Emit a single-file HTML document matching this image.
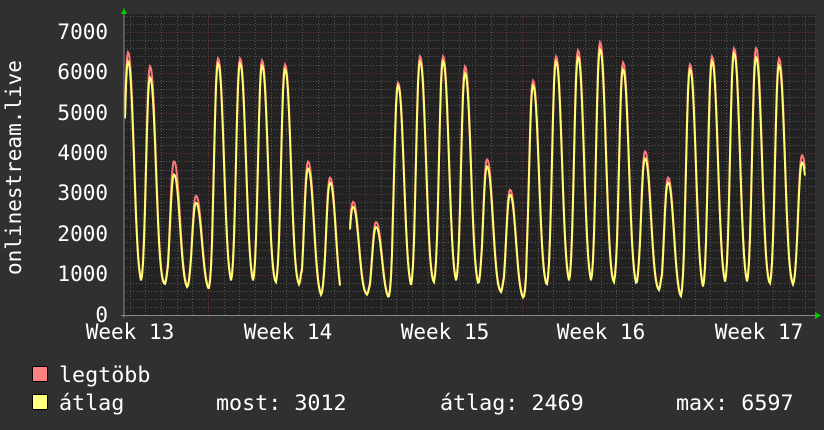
<!DOCTYPE html>
<html><head><meta charset="utf-8"><style>
html,body{margin:0;padding:0;background:#303030;}
svg{display:block}
text{font-family:"DejaVu Sans Mono","Liberation Mono",monospace;fill:#fff;}
</style></head><body>
<svg id="g" width="824" height="430" xmlns="http://www.w3.org/2000/svg">
<rect width="824" height="430" fill="#303030"/>
<rect x="124" y="14" width="691" height="301" fill="#222"/>
<g id="grid"></g>
<path id="mx" fill="none" stroke="#ff7878" stroke-width="2"/>
<path id="av" fill="none" stroke="#ffff70" stroke-width="2"/>
<line x1="124" y1="12" x2="124" y2="318" stroke="#888" stroke-width="1"/>
<line x1="121" y1="315.5" x2="815" y2="315.5" stroke="#888" stroke-width="1"/>
<polygon points="121,14 127,14 124,8" fill="#0c0"/>
<polygon points="815,312 815,319 821,315.5" fill="#0c0"/>
<g font-size="21" text-anchor="end">
<text x="108" y="39">7000</text><text x="108" y="79">6000</text><text x="108" y="120">5000</text>
<text x="108" y="160">4000</text><text x="108" y="241">2000</text><text x="108" y="200">3000</text>
<text x="108" y="281">1000</text><text x="108" y="322">0</text>
</g>
<g font-size="21" text-anchor="middle">
<text x="130" y="339">Week 13</text><text x="288" y="339">Week 14</text><text x="445" y="339">Week 15</text>
<text x="601" y="339">Week 16</text><text x="759" y="339">Week 17</text>
</g>
<text font-size="21" transform="translate(21,275) rotate(-90)">onlinestream.live</text>
<rect x="32.5" y="366.5" width="15" height="15" fill="#ff8080" stroke="#000"/>
<rect x="32.5" y="394.5" width="15" height="15" fill="#ffff80" stroke="#000"/>
<g font-size="21.7">
<text x="59" y="382">legtöbb</text>
<text x="59" y="410">átlag</text>
<text x="216" y="410">most: 3012</text>
<text x="440" y="410">átlag: 2469</text>
<text x="676" y="410">max: 6597</text>
</g>
</svg>
<script>
var NS="http://www.w3.org/2000/svg",g=document.getElementById("grid");
function ln(x1,y1,x2,y2,c,d){var l=document.createElementNS(NS,"line");l.setAttribute("x1",x1);l.setAttribute("y1",y1);l.setAttribute("x2",x2);l.setAttribute("y2",y2);l.setAttribute("stroke",c);l.setAttribute("stroke-width",1);if(d)l.setAttribute("stroke-dasharray",d);g.appendChild(l);}
for(var v=200;v<=7400;v+=200){var y=Math.round(315-v*0.0404)+0.5;ln(124,y,815,y,v%1000==0?"#6a3030":"#555","1,2");}
for(var x=208-15.7*5;x<815;x+=15.7){if(x<125)continue;ln(Math.round(x)+.5,14,Math.round(x)+.5,315,"#555","1,2");}
[208,365,522,679].forEach(function(x){ln(x+.5,14,x+.5,318,"#7a3030","1,2");});
var pk=[[128,6300,6500],[150,5900,6150],[174,3500,3800],[196,2800,2950],[218,6250,6350],[240,6250,6350],[262,6200,6300],[285,6100,6200],[308,3650,3800],[330,3300,3400],[353,2700,2800],[376,2200,2300],[398,5700,5750],[420,6300,6400],[443,6300,6400],[465,6000,6150],[487,3700,3850],[510,3000,3100],[533,5700,5800],[556,6300,6400],[578,6400,6550],[600,6600,6750],[623,6100,6250],[645,3900,4050],[668,3300,3400],[690,6100,6200],[712,6300,6400],[734,6500,6600],[756,6400,6600],[779,6200,6350],[802,3800,3950]];
var tr=[750,750,650,600,750,750,750,720,450,350,500,400,650,750,750,700,550,400,700,750,750,750,700,600,400,600,720,720,720,720,720];
function val(x,m){var ni=0,nd=1e9;for(var i=0;i<pk.length;i++){var d=x-pk[i][0]-5;if(Math.abs(d)<nd){nd=Math.abs(d);ni=i;}}
var b=tr[ni],s=b;for(var i=0;i<pk.length;i++){var d=x-pk[i][0];var sg=d<0?5:7.5;s=Math.max(s,b+(pk[i][m]-b)*Math.exp(-Math.pow(Math.abs(d)/sg,2.4)));}return s;}
function path(m,off){var p="";for(var x=125;x<=805;x+=1){if(x>340&&x<350)continue;var y=315-val(x,m)*0.0404+off;p+=(p==""||x==350?"M":"L")+x+" "+y.toFixed(1);}return p;}
document.getElementById("mx").setAttribute("d",path(2,0));
document.getElementById("av").setAttribute("d",path(1,1));
</script>
</body></html>
